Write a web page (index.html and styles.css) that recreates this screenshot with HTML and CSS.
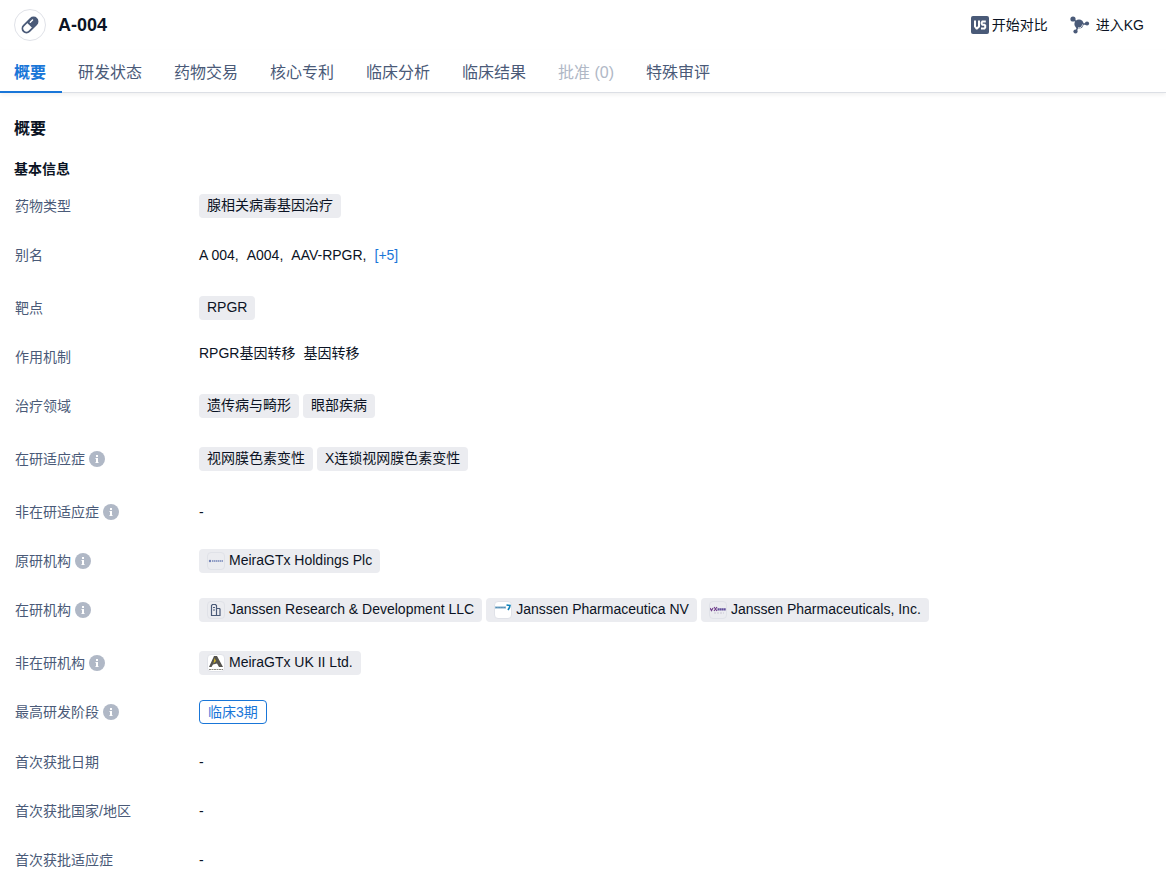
FILE: index.html
```html
<!DOCTYPE html>
<html lang="zh-CN">
<head>
  <meta charset="UTF-8">
  <meta name="viewport" content="width=device-width, initial-scale=1.0">
  <title>A-004</title>
  <link rel="stylesheet" href="styles.css">
</head>
<body>
  <!-- shared icon -->
  <svg class="sprite" aria-hidden="true">
    <symbol id="icon-info" viewBox="0 0 16 16">
      <circle cx="8" cy="8" r="8" fill="#b0b8c6"/>
      <path d="M7 4h2v2H7zM6.5 7H9v4h.5v1h-3v-1H7V8h-.5z" fill="#fff"/>
    </symbol>
  </svg>

  <header class="page-header">
    <div class="drug-icon">
      <svg width="18" height="18" viewBox="0 0 18 18">
        <g transform="rotate(45 9 9)">
          <rect x="5" y="0" width="8" height="18" rx="4" fill="#fff" stroke="#4a5a78" stroke-width="1.8"/>
          <path d="M4.5 9.5V4a4.5 4.5 0 0 1 9 0v5.5z" fill="#4a5a78"/>
          <path d="M7.2 3.6v3.2" stroke="#fff" stroke-width="1.4" stroke-linecap="round"/>
        </g>
      </svg>
    </div>
    <h1>A-004</h1>
    <div class="actions">
      <button type="button" class="action">
        <svg width="18" height="18" viewBox="0 0 18 18">
          <rect width="18" height="18" rx="2" fill="#4a5a78"/>
          <path d="M4 4.5v6l1.5 2h.5l2-2v-6M14.8 5.5h-3.4l-.7 1v1.200l.7 1h2l.8.8v2l-.8 1H10" fill="none" stroke="#fff" stroke-width="2"/>
        </svg>
        开始对比
      </button>
      <button type="button" class="action action-kg">
        <svg width="20" height="18" viewBox="0 0 20 18">
          <path d="M3 3l6 5M8.500 8L6 16M9 8h8" stroke="#4a5a78" stroke-width="1.5"/>
          <circle cx="3" cy="3" r="2.6" fill="#4a5a78"/>
          <circle cx="9" cy="8" r="4.6" fill="#4a5a78"/>
          <circle cx="17" cy="7.5" r="2.1" fill="#4a5a78"/>
          <circle cx="5.5" cy="15.5" r="2.1" fill="#4a5a78"/>
          <path d="M8 11.800a4 4 0 0 0 4.500-3.400" fill="none" stroke="#fff" stroke-width=".8"/>
        </svg>
        进入KG
      </button>
    </div>
  </header>

  <nav class="tabs">
    <a href="#summary" class="tab active">概要</a>
    <a href="#status" class="tab">研发状态</a>
    <a href="#deals" class="tab">药物交易</a>
    <a href="#patents" class="tab">核心专利</a>
    <a href="#analysis" class="tab">临床分析</a>
    <a href="#results" class="tab">临床结果</a>
    <a class="tab disabled">批准 (0)</a>
    <a href="#review" class="tab">特殊审评</a>
  </nav>

  <main id="summary">
    <h2>概要</h2>
    <h3>基本信息</h3>
    <dl class="info-list">
      <div class="row">
        <dt>药物类型</dt>
        <dd><span class="tag">腺相关病毒基因治疗</span></dd>
      </div>
      <div class="row tall">
        <dt>别名</dt>
        <dd class="aliases"><span>A 004,</span><span>A004,</span><span>AAV-RPGR,</span><a href="#more">[+5]</a></dd>
      </div>
      <div class="row">
        <dt>靶点</dt>
        <dd><span class="tag">RPGR</span></dd>
      </div>
      <div class="row">
        <dt>作用机制</dt>
        <dd class="mechanisms"><span>RPGR基因转移</span><span>基因转移</span></dd>
      </div>
      <div class="row tall">
        <dt>治疗领域</dt>
        <dd><span class="tag">遗传病与畸形</span><span class="tag">眼部疾病</span></dd>
      </div>
      <div class="row tall">
        <dt>在研适应症<svg class="info"><use href="#icon-info"/></svg></dt>
        <dd><span class="tag">视网膜色素变性</span><span class="tag">X连锁视网膜色素变性</span></dd>
      </div>
      <div class="row">
        <dt>非在研适应症<svg class="info"><use href="#icon-info"/></svg></dt>
        <dd>-</dd>
      </div>
      <div class="row">
        <dt>原研机构<svg class="info"><use href="#icon-info"/></svg></dt>
        <dd>
          <span class="tag"><svg class="logo" viewBox="0 0 16 16"><circle cx="2" cy="8" r="1.2" fill="#7484b8"/><path d="M4 8h11" stroke="#7484b8" stroke-width="1.5" stroke-dasharray="1.5 .5"/></svg>MeiraGTx Holdings Plc</span>
        </dd>
      </div>
      <div class="row tall">
        <dt>在研机构<svg class="info"><use href="#icon-info"/></svg></dt>
        <dd>
          <span class="tag"><svg class="logo" viewBox="0 0 16 16"><path d="M3.500 13.500v-10l1-1h3l1 1v10zM8.500 6.500h3l.5.5v6.500H8.500" fill="none" stroke="#4a5a78" stroke-width="1.2"/><path d="M5 5.500h2M5 8h2" stroke="#4a5a78" stroke-width="1.2"/></svg>Janssen Research &amp; Development LLC</span>
          <span class="tag"><svg class="logo white" viewBox="0 0 16 16"><path d="M0 5.500h11" stroke="#7ba9c8" stroke-width="1.8"/><path d="M1 5.500h9" stroke="#4887b0" stroke-width=".8" stroke-dasharray="1 .6"/><path d="M11.500 3l3.500.5-.5 2-1.500 2.500" fill="none" stroke="#0d80b8" stroke-width="1.6"/></svg>Janssen Pharmaceutica NV</span>
          <span class="tag"><svg class="logo" viewBox="0 0 16 16"><path d="M0 6l1.500 2.500L3 6M4 5l3 4M7 5L4 9" fill="none" stroke="#72408c" stroke-width="1.2"/><path d="M7.500 7.300H16" stroke="#63509c" stroke-width="2.2" stroke-dasharray="1.8 .3"/><path d="M4 11h10" stroke="#c9c5d3" stroke-dasharray="2 1"/></svg>Janssen Pharmaceuticals, Inc.</span>
        </dd>
      </div>
      <div class="row">
        <dt>非在研机构<svg class="info"><use href="#icon-info"/></svg></dt>
        <dd>
          <span class="tag"><svg class="logo white" viewBox="0 0 16 16"><path d="M6 1h3l6 11h-4L9 8.500 5 9.500 3.500 12H1z" fill="#55534e"/><path d="M6.500 3l1.500 3-2.500 2.500z" fill="#d0b62a"/><path d="M1 14.500h14" stroke="#8c8a82" stroke-width="1.2" stroke-dasharray="2 .5"/></svg>MeiraGTx UK II Ltd.</span>
        </dd>
      </div>
      <div class="row phase-row">
        <dt>最高研发阶段<svg class="info"><use href="#icon-info"/></svg></dt>
        <dd><span class="tag phase">临床3期</span></dd>
      </div>
      <div class="row">
        <dt>首次获批日期</dt>
        <dd>-</dd>
      </div>
      <div class="row">
        <dt>首次获批国家/地区</dt>
        <dd>-</dd>
      </div>
      <div class="row">
        <dt>首次获批适应症</dt>
        <dd>-</dd>
      </div>
    </dl>
  </main>
</body>
</html>
```
FILE: styles.css
```css
* {
  box-sizing: border-box;
}
body {
  margin: 0;
  font-family: "Liberation Sans", Arial, "Noto Sans CJK SC", sans-serif;
  font-size: 14px;
  line-height: 24px;
  color: #0b1324;
  background: #fff;
}
h1, h2, h3, dl, dd {
  margin: 0;
}
a {
  color: #1976d8;
  text-decoration: none;
}
.sprite {
  position: absolute;
  width: 0;
  height: 0;
}

/* Header */
.page-header {
  display: flex;
  align-items: center;
  height: 50px;
  padding: 0 22px 0 14px;
}
.drug-icon {
  display: flex;
  align-items: center;
  justify-content: center;
  width: 32px;
  height: 32px;
  margin-right: 12px;
  border: 1px solid #e0e2e8;
  border-radius: 50%;
}
h1 {
  font-size: 18px;
}
.actions {
  display: flex;
  gap: 22px;
  margin-left: auto;
}
.action {
  display: flex;
  align-items: center;
  gap: 3px;
  padding: 0;
  border: none;
  background: none;
  font: inherit;
  color: inherit;
  cursor: pointer;
}
.action-kg {
  gap: 6px;
}

/* Tabs */
.tabs {
  display: flex;
  height: 43px;
  border-bottom: 1px solid #dcdfe5;
  box-shadow: 0 2px 4px rgba(0, 0, 0, 0.06);
}
.tab {
  height: 43px;
  padding: 0 16px;
  font-size: 16px;
  line-height: 45px;
  color: #4a5a78;
  white-space: nowrap;
}
.tab.active {
  padding-left: 14px;
  border-bottom: 2px solid #1976d8;
  font-weight: bold;
  color: #1976d8;
}
.tab.disabled {
  color: #b0b8c6;
}

/* Summary */
main {
  padding: 24px 14px 0;
}
h2 {
  font-size: 16px;
  margin-bottom: 16px;
}
h3 {
  font-size: 14px;
  margin-bottom: 13px;
}
.row {
  display: flex;
  padding: 0 1px 25px;
}
.row.tall {
  padding-bottom: 29px;
}
.row.phase-row {
  padding-bottom: 26px;
}
.row:last-child {
  padding-bottom: 0;
}
dt {
  display: flex;
  flex: 0 0 184px;
  align-items: center;
  height: 24px;
  color: #4a5a78;
}
.info {
  width: 16px;
  height: 16px;
  margin-left: 4px;
}
dd {
  display: flex;
  flex-wrap: wrap;
  gap: 4px;
}
.aliases, .mechanisms {
  gap: 8px;
}
.mechanisms {
  line-height: 16px;
}
.tag {
  display: flex;
  height: 24px;
  padding: 0 8px;
  border-radius: 4px;
  background: #ebecf0;
  line-height: 22px;
}
.tag.phase {
  border: 1px solid #1976d8;
  background: #fff;
  color: #1976d8;
}
.logo {
  width: 18px;
  height: 18px;
  margin: 3px 4px 3px 0;
  border: 1px solid #e0e2e8;
  border-radius: 4px;
}
.logo.white {
  background: #fff;
}
```
